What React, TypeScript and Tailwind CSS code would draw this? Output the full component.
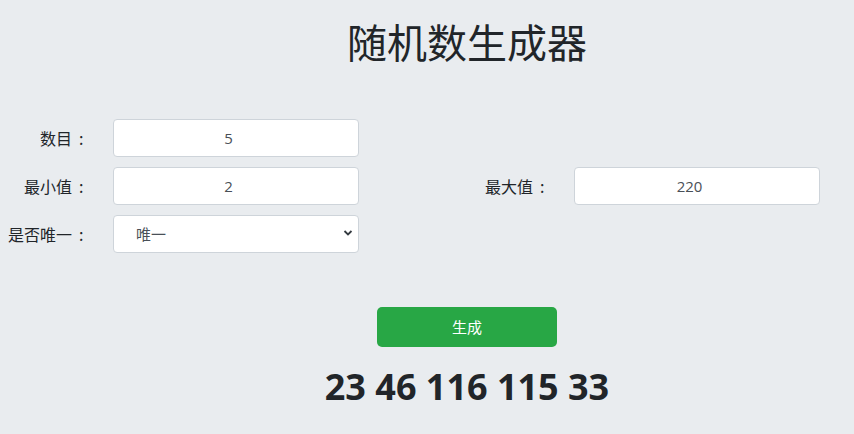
import React from "react";

const cjk = { fontFamily: '"Noto Sans CJK SC", "Open Sans", sans-serif' };

function Label({ text }: { text: string }) {
  return (
    <label className="flex justify-end text-[16px] leading-[24px]">
      <span>{text}</span>
      <span className="inline-block w-[16px] pl-[7px] text-left">:</span>
    </label>
  );
}

const inputCls =
  "h-[38px] w-full rounded-[4px] border border-[#ced4da] bg-white px-3 text-center text-[15px] text-[#495057] outline-none";

export default function App() {
  return (
    <div className="min-h-[434px] w-full bg-[#e9ecef] text-[#212529]" style={cjk}>
      <div className="pl-[80px] pt-[17px] flex flex-col items-center">
        <h1 className="text-[40px] leading-[48px] font-normal text-[#212529]">随机数生成器</h1>
      </div>
      <div className="mt-[54px] grid grid-cols-[88px_246px_165px_246px] gap-x-[25px] gap-y-[10px] items-center">
        <Label text="数目" />
        <input
          type="number"
          defaultValue={5}
          className={inputCls}
          style={{ fontFamily: '"Open Sans", sans-serif' }}
        />
        <div />
        <div />
        <Label text="最小值" />
        <input
          type="number"
          defaultValue={2}
          className={inputCls}
          style={{ fontFamily: '"Open Sans", sans-serif' }}
        />
        <Label text="最大值" />
        <input
          type="number"
          defaultValue={220}
          className={inputCls}
          style={{ fontFamily: '"Open Sans", sans-serif' }}
        />
        <Label text="是否唯一" />
        <div className="relative h-[38px] w-full">
          <select
            defaultValue="1"
            className="h-[38px] w-full appearance-none rounded-[4px] border border-[#ced4da] bg-white pl-[22px] pr-8 text-[15px] text-[#495057] outline-none"
            style={cjk}
          >
            <option value="1">唯一</option>
            <option value="0">不唯一</option>
          </select>
          <svg
            className="pointer-events-none absolute right-[6px] top-[14px]"
            width="10"
            height="8"
            viewBox="0 0 10 8"
          >
            <path d="M1.5 2 L5 5.5 L8.5 2" fill="none" stroke="#343a40" strokeWidth="1.8" />
          </svg>
        </div>
        <div />
        <div />
      </div>
      <div className="pl-[80px] mt-[54px] flex flex-col items-center">
        <button className="h-[40px] w-[180px] rounded-[5px] bg-[#28a745] text-[15px] text-white">
          生成
        </button>
        <div
          className="mt-[17px] text-[36px] leading-[46px] font-bold text-[#212529]"
          style={{ fontFamily: '"Open Sans", sans-serif' }}
        >
          23 46 116 115 33
        </div>
      </div>
    </div>
  );
}
